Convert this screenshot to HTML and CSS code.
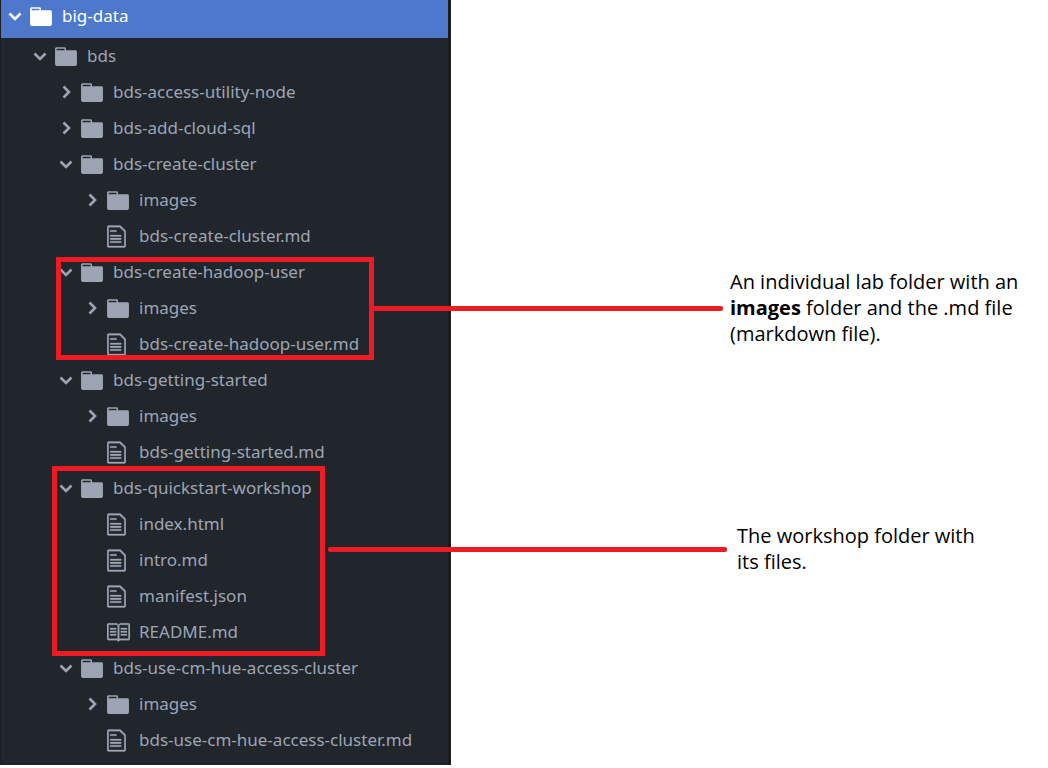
FILE: index.html
```html
<!DOCTYPE html>
<html lang="en">
<head>
<meta charset="utf-8">
<meta name="viewport" content="width=device-width, initial-scale=1">
<title>big-data project tree</title>
<link rel="stylesheet" href="styles.css">
</head>
<body>
<svg class="sprite" aria-hidden="true">
  <symbol id="down" viewBox="0 0 16 16"><path d="M3.5 5.5 9 11l5.500-5.500" fill="none" stroke="currentColor" stroke-width="2.600"/></symbol>
  <symbol id="right" viewBox="0 0 16 16"><path d="M6.500 2.500 12 8l-5.500 5.500" fill="none" stroke="currentColor" stroke-width="2.600"/></symbol>
  <symbol id="folder" viewBox="0 0 14 16"><path fill="currentColor" d="M13 4H7V3c0-.66-.31-1-1-1H1c-.55 0-1 .45-1 1v10c0 .55.45 1 1 1h12c.55 0 1-.45 1-1V5c0-.55-.45-1-1-1zM6 4H1V3h5v1z"/></symbol>
  <symbol id="file" viewBox="0 0 12 16"><path fill="currentColor" stroke="currentColor" stroke-width=".2" d="M6 5H2V4h4v1zM2 8h7V7H2v1zm0 2h7V9H2v1zm0 2h7v-1H2v1zm10-7.500V14c0 .55-.45 1-1 1H1c-.55 0-1-.45-1-1V2c0-.55.45-1 1-1h7.500L12 4.500zM11 5L8 2H1v12h10V5z"/></symbol>
  <symbol id="book" viewBox="1 0 15 16"><path fill="currentColor" stroke="currentColor" stroke-width=".2" d="M3 5h4v1H3V5zm0 3h4V7H3v1zm0 2h4V9H3v1zm11-5h-4v1h4V5zm0 2h-4v1h4V7zm0 2h-4v1h4V9zm2-6v9c0 .55-.45 1-1 1H9.500l-1 1-1-1H2c-.55 0-1-.45-1-1V3c0-.55.45-1 1-1h5.500l1 1 1-1H15c.55 0 1 .45 1 1zm-8 .5L7.500 3H2v9h6V3.500zm7-.5H9.500l-.5.5V12h6V3z"/></symbol>
</svg>
<main class="page">
  <nav class="tree" aria-label="Project">
    <button class="row root" aria-expanded="true"><svg class="chevron"><use href="#down"/></svg><svg class="icon folder"><use href="#folder"/></svg><span>big-data</span></button>
    <ul class="level">
      <li><button class="row" aria-expanded="true"><svg class="chevron"><use href="#down"/></svg><svg class="icon folder"><use href="#folder"/></svg><span>bds</span></button>
        <ul class="level">
          <li><button class="row" aria-expanded="false"><svg class="chevron"><use href="#right"/></svg><svg class="icon folder"><use href="#folder"/></svg><span>bds-access-utility-node</span></button></li>
          <li><button class="row" aria-expanded="false"><svg class="chevron"><use href="#right"/></svg><svg class="icon folder"><use href="#folder"/></svg><span>bds-add-cloud-sql</span></button></li>
          <li><button class="row" aria-expanded="true"><svg class="chevron"><use href="#down"/></svg><svg class="icon folder"><use href="#folder"/></svg><span>bds-create-cluster</span></button>
            <ul class="level">
              <li><button class="row" aria-expanded="false"><svg class="chevron"><use href="#right"/></svg><svg class="icon folder"><use href="#folder"/></svg><span>images</span></button></li>
              <li><a class="row file" href="#"><svg class="icon page-icon"><use href="#file"/></svg><span>bds-create-cluster.md</span></a></li>
            </ul>
          </li>
          <li><button class="row" aria-expanded="true"><svg class="chevron"><use href="#down"/></svg><svg class="icon folder"><use href="#folder"/></svg><span>bds-create-hadoop-user</span></button>
            <ul class="level">
              <li><button class="row" aria-expanded="false"><svg class="chevron"><use href="#right"/></svg><svg class="icon folder"><use href="#folder"/></svg><span>images</span></button></li>
              <li><a class="row file" href="#"><svg class="icon page-icon"><use href="#file"/></svg><span>bds-create-hadoop-user.md</span></a></li>
            </ul>
          </li>
          <li><button class="row" aria-expanded="true"><svg class="chevron"><use href="#down"/></svg><svg class="icon folder"><use href="#folder"/></svg><span>bds-getting-started</span></button>
            <ul class="level">
              <li><button class="row" aria-expanded="false"><svg class="chevron"><use href="#right"/></svg><svg class="icon folder"><use href="#folder"/></svg><span>images</span></button></li>
              <li><a class="row file" href="#"><svg class="icon page-icon"><use href="#file"/></svg><span>bds-getting-started.md</span></a></li>
            </ul>
          </li>
          <li><button class="row" aria-expanded="true"><svg class="chevron"><use href="#down"/></svg><svg class="icon folder"><use href="#folder"/></svg><span>bds-quickstart-workshop</span></button>
            <ul class="level">
              <li><a class="row file" href="#"><svg class="icon page-icon"><use href="#file"/></svg><span>index.html</span></a></li>
              <li><a class="row file" href="#"><svg class="icon page-icon"><use href="#file"/></svg><span>intro.md</span></a></li>
              <li><a class="row file" href="#"><svg class="icon page-icon"><use href="#file"/></svg><span>manifest.json</span></a></li>
              <li><a class="row file" href="#"><svg class="icon book"><use href="#book"/></svg><span>README.md</span></a></li>
            </ul>
          </li>
          <li><button class="row" aria-expanded="true"><svg class="chevron"><use href="#down"/></svg><svg class="icon folder"><use href="#folder"/></svg><span>bds-use-cm-hue-access-cluster</span></button>
            <ul class="level">
              <li><button class="row" aria-expanded="false"><svg class="chevron"><use href="#right"/></svg><svg class="icon folder"><use href="#folder"/></svg><span>images</span></button></li>
              <li><a class="row file" href="#"><svg class="icon page-icon"><use href="#file"/></svg><span>bds-use-cm-hue-access-cluster.md</span></a></li>
            </ul>
          </li>
        </ul>
      </li>
    </ul>
  </nav>
  <section class="notes" aria-label="Notes">
    <p class="note lab-note">An individual lab folder with an <b>images</b> folder and the .md file (markdown file).</p>
    <p class="note workshop-note">The workshop folder with its files.</p>
  </section>
  <div class="frame lab-frame"></div>
  <div class="line lab-line"></div>
  <div class="frame workshop-frame"></div>
  <div class="line workshop-line"></div>
</main>
</body>
</html>
```

FILE: styles.css
```css
* { box-sizing: border-box; }

body {
  margin: 0;
  background: #fff;
  font-family: "Open Sans", "Noto Sans", sans-serif;
}

.sprite {
  position: absolute;
  width: 0;
  height: 0;
}

.page {
  position: relative;
  display: grid;
  grid-template-columns: 451px minmax(0, 1fr);
  align-items: start;
}

.tree {
  padding-bottom: 7px;
  border-left: 1px solid #1b1d22;
  border-right: 3px solid #1b1b1f;
  background: #21252c;
  color: #9da5b4;
  font-family: "Noto Sans", "Open Sans", sans-serif;
  font-size: 17px;
}

.level {
  margin: 0;
  padding: 0 0 0 26px;
  list-style: none;
}

.row {
  display: flex;
  align-items: center;
  gap: 8px;
  width: 100%;
  height: 36px;
  padding: 0 0 0 4px;
  border: 0;
  background: none;
  color: inherit;
  font: inherit;
  line-height: 24px;
  text-align: left;
  text-decoration: none;
  white-space: nowrap;
}

.root {
  height: 38px;
  padding: 0 0 6px 5px;
  background: #4d78cc;
  color: #fff;
}

.file { padding-left: 28px; }

.chevron {
  flex: none;
  width: 16px;
  height: 16px;
}

.icon {
  flex: none;
  height: 25px;
}

.folder {
  width: 22px;
  margin-right: 2px;
}

.page-icon {
  width: 19px;
  margin-right: 5px;
}

.book {
  width: 23px;
  margin-right: 1px;
}

.notes {
  display: flex;
  flex-direction: column;
  gap: 176px;
  padding: 269px 24px 0 279px;
  color: #000;
  font-size: 20px;
  line-height: 26px;
}

.note {
  max-width: 290px;
  margin: 0;
}

.workshop-note {
  max-width: 260px;
  margin-left: 7px;
}

.frame {
  position: absolute;
  border: 5px solid #ed1c24;
}

.lab-frame {
  top: 257px;
  left: 56px;
  width: 318px;
  height: 103px;
}

.workshop-frame {
  top: 466px;
  left: 52px;
  width: 273px;
  height: 190px;
}

.line {
  position: absolute;
  height: 5px;
  border-radius: 2px;
  background: #ed1c24;
}

.lab-line {
  top: 306px;
  left: 372px;
  width: 351px;
}

.workshop-line {
  top: 547px;
  left: 328px;
  width: 399px;
}
```
